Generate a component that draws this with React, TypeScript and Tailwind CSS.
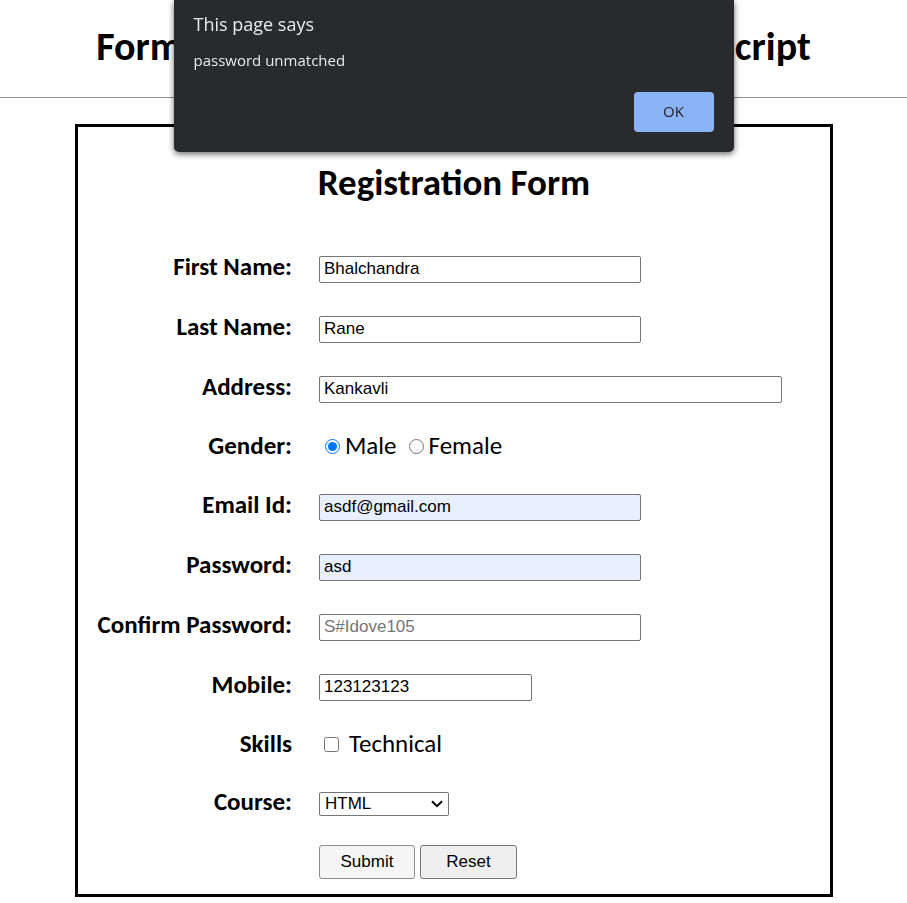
import { useState, type ReactNode } from "react";

const inputClass =
  "h-[27px] max-w-full rounded-[2px] border border-[#767676] px-1 text-[17px] leading-5 text-black placeholder:text-[#757575]";

type RowProps = {
  label: string;
  htmlFor: string;
  short?: boolean;
  children: ReactNode;
};

function Row({ label, htmlFor, short, children }: RowProps) {
  return (
    <div
      className={`grid grid-cols-[214px_minmax(0,1fr)] items-center gap-x-[27px] ${short ? "h-[58px]" : "h-[60px]"}`}
    >
      <label
        htmlFor={htmlFor}
        className="pb-1 text-right font-['Calibri','Carlito','Lato',sans-serif] text-[25px] leading-7 font-bold whitespace-nowrap"
      >
        {label}
      </label>
      <div className="flex items-center">{children}</div>
    </div>
  );
}

const choiceLabel =
  "pb-1 font-['Calibri','Carlito','Lato',sans-serif] text-[25px] leading-7";

function AlertDialog({ onClose }: { onClose: () => void }) {
  return (
    <div
      role="alertdialog"
      aria-labelledby="alert-title"
      aria-describedby="alert-text"
      className="fixed top-0 left-1/2 flex w-[560px] -translate-x-1/2 flex-col rounded-b-[5px] bg-[#292a2d] px-5 pt-3 pb-5 font-['Segoe_UI','Open_Sans',sans-serif] text-[#e8eaed] shadow-[0_2px_6px_rgba(0,0,0,0.6)]"
    >
      <h2 id="alert-title" className="text-lg leading-6">
        This page says
      </h2>
      <p id="alert-text" className="mt-3 text-[15px] leading-6">
        password unmatched
      </p>
      <button
        type="button"
        onClick={onClose}
        className="mt-5 h-10 w-20 self-end rounded bg-[#8ab4f8] pb-0.5 text-[15px] text-[#202124]"
      >
        OK
      </button>
    </div>
  );
}

export default function App() {
  const [open, setOpen] = useState(true);

  return (
    <div className="min-h-screen bg-white pb-1 font-['Arial','Liberation_Sans',sans-serif] text-black">
      <h1 className="pt-6 pb-7 text-center font-['Calibri','Carlito','Lato',sans-serif] text-[40px] leading-[45px] font-bold whitespace-nowrap">
        Form Validation in HTML5 Using Java Script
      </h1>
      <hr className="border-[#8f8f8f]" />

      <form
        onSubmit={(e) => {
          e.preventDefault();
          setOpen(true);
        }}
        className="mt-[26px] mr-[74px] ml-[75px] border-3 border-black pb-[15px]"
      >
        <h2 className="pt-8 pb-8 text-center font-['Calibri','Carlito','Lato',sans-serif] text-[37px] leading-[48px] font-bold">
          Registration Form
        </h2>

        <Row label="First Name:" htmlFor="first">
          <input id="first" type="text" defaultValue="Bhalchandra" className={`${inputClass} w-[322px]`} />
        </Row>
        <Row label="Last Name:" htmlFor="last">
          <input id="last" type="text" defaultValue="Rane" className={`${inputClass} w-[322px]`} />
        </Row>
        <Row label="Address:" htmlFor="address">
          <input id="address" type="text" defaultValue="Kankavli" className={`${inputClass} w-[463px]`} />
        </Row>
        <Row label="Gender:" htmlFor="male" short>
          <input id="male" type="radio" name="gender" defaultChecked className="mr-[5px] mb-1 ml-1.5 size-[15px]" />
          <label htmlFor="male" className={choiceLabel}>
            Male
          </label>
          <input id="female" type="radio" name="gender" className="mr-[5px] mb-1 ml-3 size-[15px]" />
          <label htmlFor="female" className={choiceLabel}>
            Female
          </label>
        </Row>
        <Row label="Email Id:" htmlFor="email">
          <input
            id="email"
            type="email"
            defaultValue="asdf@gmail.com"
            className={`${inputClass} w-[322px] bg-[#e8f0fe]`}
          />
        </Row>
        <Row label="Password:" htmlFor="password">
          <input id="password" type="text" defaultValue="asd" className={`${inputClass} w-[322px] bg-[#e8f0fe]`} />
        </Row>
        <Row label="Confirm Password:" htmlFor="confirm">
          <input id="confirm" type="text" placeholder="S#Idove105" className={`${inputClass} w-[322px]`} />
        </Row>
        <Row label="Mobile:" htmlFor="mobile">
          <input id="mobile" type="text" defaultValue="123123123" className={`${inputClass} w-[213px]`} />
        </Row>
        <Row label="Skills" htmlFor="technical" short>
          <input id="technical" type="checkbox" className="mr-2.5 mb-1 ml-[5px] size-[15px]" />
          <label htmlFor="technical" className={choiceLabel}>
            Technical
          </label>
        </Row>
        <Row label="Course:" htmlFor="course" short>
          <div className="relative w-[130px]">
            <select
              id="course"
              className="block h-6 w-full appearance-none rounded-[2px] border border-[#767676] bg-white pr-5 pl-[5px] text-[17px] leading-5"
            >
              <option>HTML</option>
              <option>CSS</option>
              <option>JavaScript</option>
            </select>
            <svg
              viewBox="0 0 12 8"
              fill="none"
              stroke="currentColor"
              strokeWidth="2"
              aria-hidden="true"
              className="pointer-events-none absolute top-2 right-1.5 h-2 w-3"
            >
              <path d="M1 1.2 6 6.2 11 1.2" />
            </svg>
          </div>
        </Row>

        <div className="mt-3 flex gap-[5px] pl-[241px]">
          <button
            type="submit"
            className="h-[34px] w-24 rounded-[3px] border border-[#8d8d8d] bg-[#f5f5f5] text-[17px] leading-5"
          >
            Submit
          </button>
          <button
            type="reset"
            className="h-[34px] w-[97px] rounded-[3px] border border-[#767676] bg-[#efefef] text-[17px] leading-5"
          >
            Reset
          </button>
        </div>
      </form>

      {open && <AlertDialog onClose={() => setOpen(false)} />}
    </div>
  );
}
